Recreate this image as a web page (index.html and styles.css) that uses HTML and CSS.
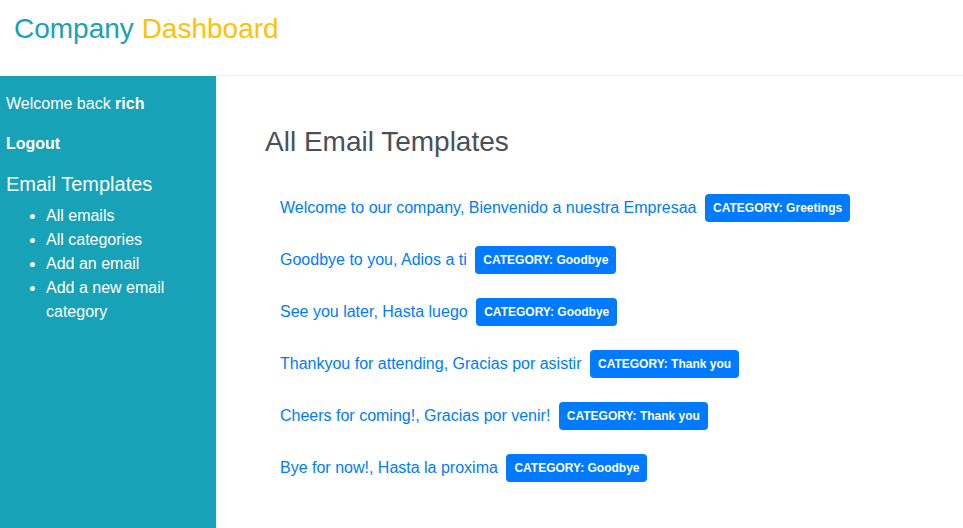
FILE: index.html
```html
<!DOCTYPE html>
<html lang="en">
<head>
<meta charset="utf-8">
<title>Company Dashboard</title>
<link rel="stylesheet" href="styles.css">
</head>
<body>
<header class="topbar">
  <h1 class="brand"><span class="brand-a">Company</span> <span class="brand-b">Dashboard</span></h1>
</header>
<div class="layout">
  <aside class="sidebar">
    <p class="welcome">Welcome back <strong>rich</strong></p>
    <p class="logout"><a href="#">Logout</a></p>
    <h2 class="side-title">Email Templates</h2>
    <ul class="side-nav">
      <li><a href="#">All emails</a></li>
      <li><a href="#">All categories</a></li>
      <li><a href="#">Add an email</a></li>
      <li><a href="#">Add a new email category</a></li>
    </ul>
  </aside>
  <main class="content">
    <h2 class="page-title">All Email Templates</h2>
    <ul class="templates">
      <li class="template"><a href="#">Welcome to our company, Bienvenido a nuestra Empresaa</a><span class="badge">CATEGORY: Greetings</span></li>
      <li class="template"><a href="#">Goodbye to you, Adios a ti</a><span class="badge">CATEGORY: Goodbye</span></li>
      <li class="template"><a href="#">See you later, Hasta luego</a><span class="badge">CATEGORY: Goodbye</span></li>
      <li class="template"><a href="#">Thankyou for attending, Gracias por asistir</a><span class="badge">CATEGORY: Thank you</span></li>
      <li class="template"><a href="#">Cheers for coming!, Gracias por venir!</a><span class="badge">CATEGORY: Thank you</span></li>
      <li class="template"><a href="#">Bye for now!, Hasta la proxima</a><span class="badge">CATEGORY: Goodbye</span></li>
    </ul>
  </main>
</div>
</body>
</html>
```
FILE: styles.css
```css
* { box-sizing: border-box; }
html, body {
  margin: 0;
  height: 100%;
  overflow: hidden;
}
body {
  font-family: "Liberation Sans", Arial, sans-serif;
  font-size: 16px;
  line-height: 1.5;
  color: #212529;
  background: #fff;
  display: flex;
  flex-direction: column;
}
a { text-decoration: none; }

.topbar {
  height: 76px;
  border-bottom: 1px solid #f3f3f3;
  padding: 12px 14px 0;
  flex: none;
}
.brand {
  margin: 0;
  font-size: 28px;
  font-weight: 400;
  line-height: 1.2;
}
.brand-a { color: #17a2b8; }
.brand-b { color: #ffc107; }

.layout {
  flex: 1;
  display: flex;
  min-height: 0;
}
.sidebar {
  width: 216px;
  flex: none;
  background: #17a2b8;
  color: #fff;
  padding: 16px 6px 0;
}
.sidebar a { color: #fff; }
.welcome, .logout {
  margin: 0 0 16px;
}
.logout a { font-weight: 700; }
.side-title {
  margin: 0 0 8px;
  font-size: 20px;
  font-weight: 400;
  line-height: 1.2;
}
.side-nav {
  margin: 0;
  padding-left: 40px;
}
.side-nav li { line-height: 24px; }

.content {
  flex: 1;
  padding: 49px 0 0 49px;
}
.page-title {
  margin: 0 0 23px;
  font-size: 28px;
  font-weight: 400;
  line-height: 1.2;
  color: #495057;
}
.templates {
  list-style: none;
  margin: 0;
  padding: 0;
}
.template {
  display: flex;
  align-items: center;
  gap: 8.5px;
  padding: 12px 15px;
}
.template a { color: #007bff; }
.badge {
  display: inline-block;
  background: #007bff;
  color: #fff;
  font-size: 12px;
  font-weight: 700;
  line-height: 1;
  padding: 8px;
  border-radius: 4px;
  white-space: nowrap;
}
```
